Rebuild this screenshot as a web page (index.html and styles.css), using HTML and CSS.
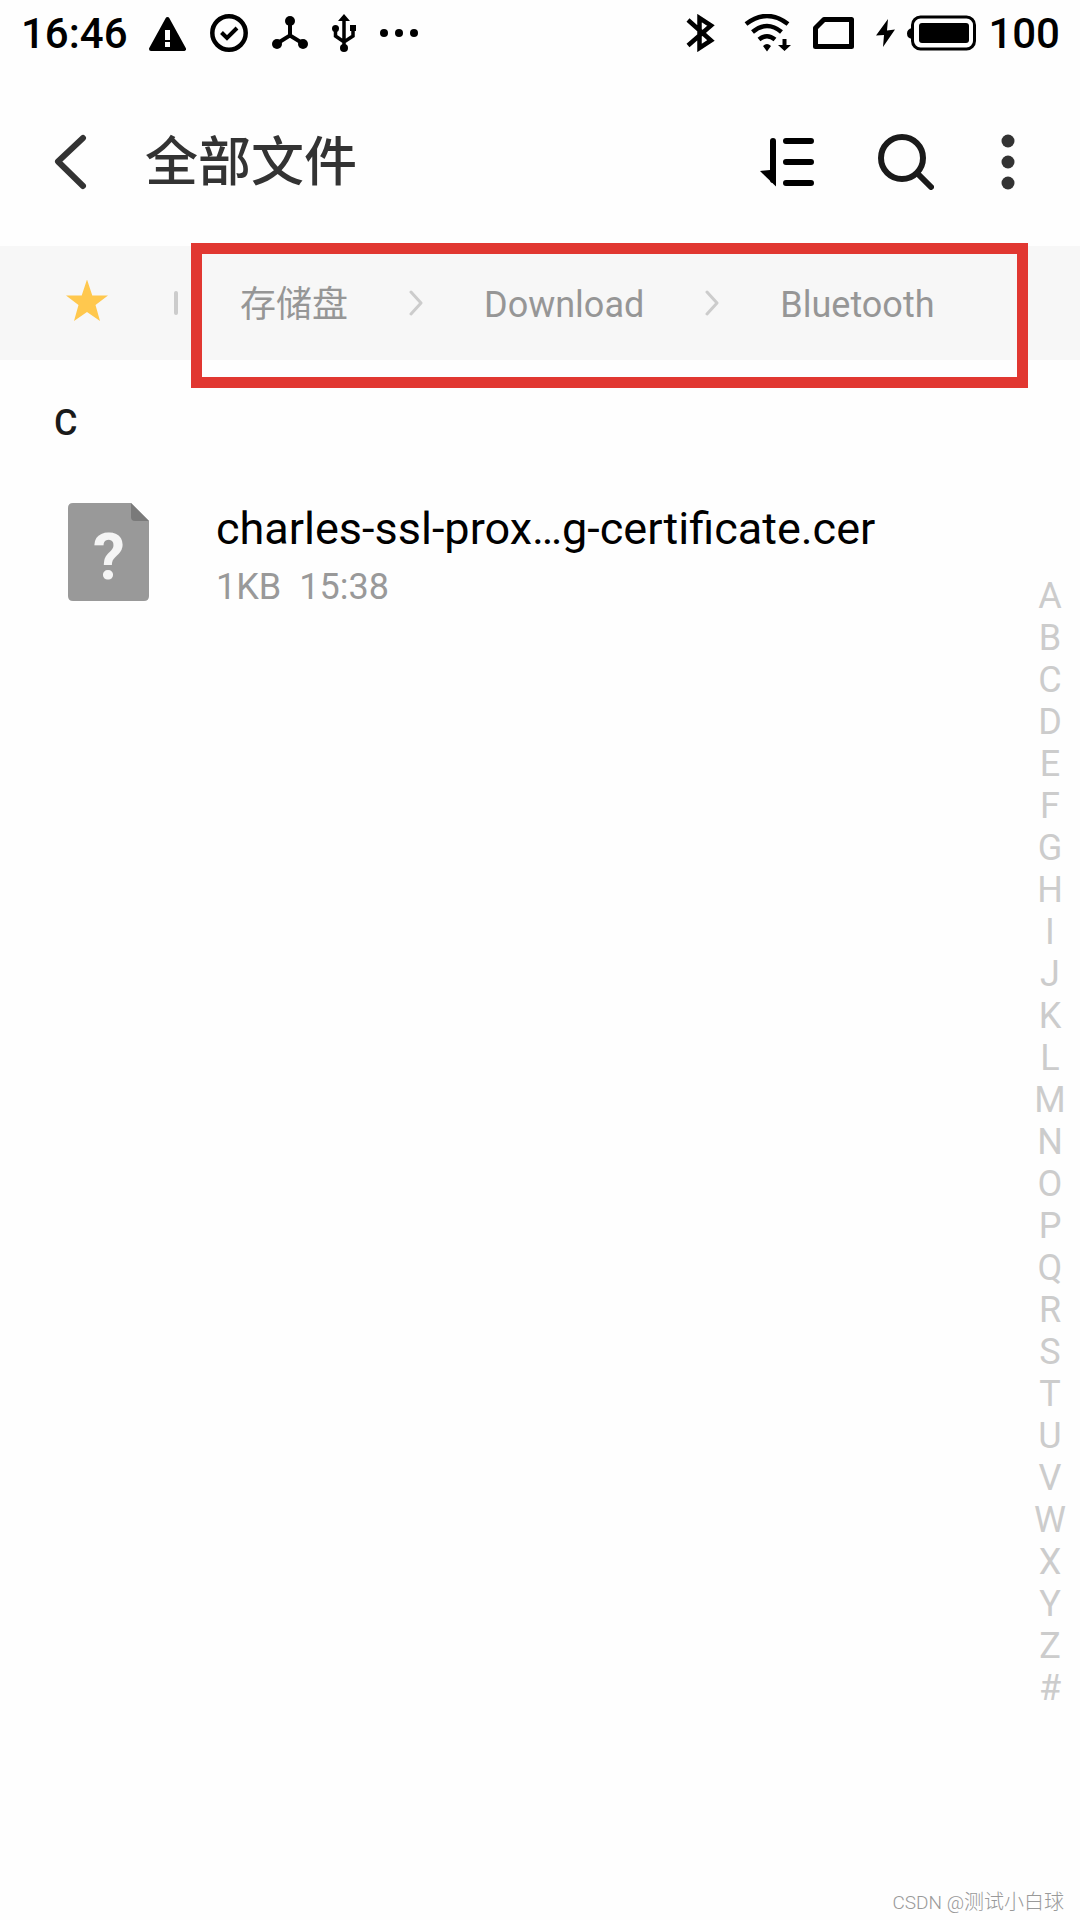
FILE: index.html
```
<!DOCTYPE html>
<html lang="zh-CN">
<head>
<meta charset="utf-8">
<meta name="viewport" content="width=device-width, initial-scale=1">
<title>全部文件</title>
<link rel="stylesheet" href="styles.css">
</head>
<body class="screen">
  <div class="status">
    <div class="status-left">
      <span class="time">16:46</span>
      <div class="notices">
        <svg width="37" height="38" viewBox="149 14 37 38" aria-hidden="true"><path d="M167.500 19 184 49H151z" stroke="#000" stroke-width="4" stroke-linejoin="round"/><path d="M165 30h5v10h-5zM165 42h5v5h-5z" fill="#fff"/></svg>
        <svg width="38" height="38" viewBox="210 14 38 38" aria-hidden="true" fill="none" stroke="#000"><circle cx="229" cy="33" r="16.700" stroke-width="4.500"/><path d="M221.500 32.500 227 38 237 28" stroke-width="4"/></svg>
        <svg width="36" height="38" viewBox="272 14 36 38" aria-hidden="true"><path d="M290 21V35.500L277 43.500M290 35.500 303 43.500" fill="none" stroke="#000" stroke-width="4"/><circle cx="290" cy="21" r="5"/><circle cx="277" cy="44" r="5"/><circle cx="303" cy="44" r="5"/></svg>
        <svg width="24" height="38" viewBox="332 14 24 38" aria-hidden="true"><path d="M344 19V48M335.500 28V36L344 42 353 36V28" fill="none" stroke="#000" stroke-width="3.500"/><path d="M344 14 350 21H338zM350 25h6v6h-6z"/><circle cx="335.500" cy="28.500" r="3.500"/><circle cx="344" cy="48" r="4"/></svg>
        <svg width="38" height="38" viewBox="380 14 38 38" aria-hidden="true"><circle cx="384" cy="33" r="4"/><circle cx="399" cy="33" r="4"/><circle cx="414" cy="33" r="4"/></svg>
      </div>
    </div>
    <div class="status-right">
      <svg width="37" height="38" viewBox="685 14 37 38" aria-hidden="true"><path d="M687 20 710 40.500 698.500 48V18L710 25.500 687 45.500" fill="none" stroke="#000" stroke-width="4.500"/></svg>
      <svg width="48" height="38" viewBox="743 14 48 38" aria-hidden="true"><g fill="none" stroke="#000" stroke-width="4.500"><path d="M745 24Q766 8 787 24"/><path d="M751.500 32Q766 20 780.500 32"/><path d="M758 39.500Q766 33 774 39.500"/></g><path d="M762 46Q766 42 770 46L766 51.500zM781.500 39h4v6h4.500l-6.500 6-6.500-6h4.500z"/></svg>
      <svg width="41" height="38" viewBox="812 14 41 38" aria-hidden="true"><path d="M814.500 46.500V28L823 19.500H850.500V46.500z" fill="none" stroke="#000" stroke-width="5" stroke-linejoin="round"/></svg>
      <div class="power">
        <svg width="20" height="38" viewBox="874 14 20 38" aria-hidden="true"><path d="M887 19 875 35.500 883 35 882 47 894 29.500 886 30.500z"/></svg>
        <svg width="69" height="38" viewBox="907 14 69 38" aria-hidden="true"><rect x="912.500" y="17" width="62" height="32" rx="8" fill="none" stroke="#000" stroke-width="3"/><rect x="919" y="23" width="50" height="20" rx="3"/><path d="M912 28Q907 29 907 33.500T912 39z"/></svg>
        <span class="level">100</span>
      </div>
    </div>
  </div>

  <header class="toolbar">
    <button class="tool" type="button" aria-label="返回"><svg width="33" height="56" viewBox="54 134 33 56"><path d="M83 138 58 161.500 83 186" fill="none" stroke="#333" stroke-width="6" stroke-linecap="round" stroke-linejoin="round"/></svg></button>
    <h1 class="title">全部文件</h1>
    <div class="actions">
      <button class="tool" type="button" aria-label="排序"><svg width="54" height="56" viewBox="761 134 54 56"><path d="M774 141V180M787 141H812M787 162H812M787 183H812" stroke="#000" stroke-width="6" stroke-linecap="round"/><path d="M761 171 771 170H777V186.500z"/></svg></button>
      <button class="tool" type="button" aria-label="搜索"><svg width="56" height="56" viewBox="878 134 56 56"><g fill="none" stroke="#1a1a1a" stroke-width="6"><circle cx="902" cy="158" r="21"/><path d="M917.500 173.500 931 187" stroke-linecap="round"/></g></svg></button>
      <button class="tool" type="button" aria-label="更多"><svg width="20" height="56" viewBox="998 134 20 56" fill="#333"><circle cx="1008" cy="141" r="6.500"/><circle cx="1008" cy="162" r="6.500"/><circle cx="1008" cy="183" r="6.500"/></svg></button>
    </div>
  </header>

  <nav class="path" aria-label="路径">
    <button class="tool" type="button" aria-label="收藏"><svg width="42" height="46" viewBox="66 281 42 46"><path d="M87 280.500 92.300 296.500H108L95.500 306 100 322 87 313 74 322 78.500 306 66 296.500H81.700z" fill="#ffc84e"/></svg></button>
    <span class="divider"></span>
    <div class="crumbs">
      <a class="crumb" href="#">存储盘</a>
      <svg width="14" height="26" viewBox="0 0 14 26" aria-hidden="true"><path d="M2 2 12 13 2 24"/></svg>
      <a class="crumb" href="#">Download</a>
      <svg width="14" height="26" viewBox="0 0 14 26" aria-hidden="true"><path d="M2 2 12 13 2 24"/></svg>
      <a class="crumb" href="#">Bluetooth</a>
    </div>
    <span class="highlight"></span>
  </nav>

  <main class="content">
    <section class="files">
      <h2 class="group">C</h2>
      <a class="file" href="#">
        <svg width="82" height="100" viewBox="68 502 82 100" aria-hidden="true"><path d="M73 503H131L149 521V596Q149 601 144 601H73Q68 601 68 596V508Q68 503 73 503z" fill="#999"/><path d="M131 503 149 521H135Q131 521 131 517z" fill="#7a7a7a"/><text class="mark" x="109" y="579" text-anchor="middle">?</text></svg>
        <span class="file-text">
          <span class="file-name">charles-ssl-prox…g-certificate.cer</span>
          <span class="file-meta"><span>1KB</span><span>15:38</span></span>
        </span>
      </a>
    </section>
    <nav class="index" aria-label="索引">
      <a href="#">A</a><a href="#">B</a><a href="#">C</a><a href="#">D</a><a href="#">E</a><a href="#">F</a><a href="#">G</a><a href="#">H</a><a href="#">I</a><a href="#">J</a><a href="#">K</a><a href="#">L</a><a href="#">M</a><a href="#">N</a><a href="#">O</a><a href="#">P</a><a href="#">Q</a><a href="#">R</a><a href="#">S</a><a href="#">T</a><a href="#">U</a><a href="#">V</a><a href="#">W</a><a href="#">X</a><a href="#">Y</a><a href="#">Z</a><a href="#">#</a>
    </nav>
  </main>

  <footer class="credit"><span class="site">CSDN @</span>测试小白球</footer>
</body>
</html>
```
FILE: styles.css
```
* {
  box-sizing: border-box;
}

.screen {
  display: flex;
  flex-direction: column;
  min-height: 100vh;
  margin: 0;
  background: #fefefe;
  color: #000;
  font-family: Roboto, "Noto Sans CJK SC", sans-serif;
  font-size: 36px;
  line-height: 42px;
}

svg {
  display: block;
  flex: none;
}

a {
  color: inherit;
  text-decoration: none;
}

.status {
  display: flex;
  justify-content: space-between;
  align-items: center;
  height: 66px;
  padding: 0 20px 0 21px;
  font-size: 42px;
  font-weight: 500;
}

.status-left {
  display: flex;
  align-items: center;
  gap: 21px;
}

.notices {
  display: flex;
  gap: 24px;
}

.time,
.level {
  padding-top: 2px;
}

.status-right {
  display: flex;
  align-items: center;
  gap: 21px;
}

.power {
  display: flex;
  align-items: center;
  gap: 12px;
}

.toolbar {
  display: flex;
  align-items: center;
  height: 180px;
  padding: 12px 62px 0 54px;
}

.tool {
  padding: 0;
  border: 0;
  background: none;
  cursor: pointer;
}

.title {
  flex: 1;
  margin: 0 0 0 58px;
  padding-top: 2px;
  color: #333;
  font-size: 53px;
  font-weight: 500;
  line-height: 64px;
}

.actions {
  display: flex;
  gap: 64px;
}

.path {
  position: relative;
  display: flex;
  align-items: center;
  height: 114px;
  padding: 0 66px;
  background: #f7f7f7;
}

.divider {
  width: 4px;
  height: 24px;
  margin: 0 62px 0 66px;
  border-radius: 2px;
  background: #ccc;
}

.crumbs {
  display: flex;
  align-items: center;
  gap: 61px;
  fill: none;
  stroke: #ccc;
  stroke-width: 3px;
  stroke-linecap: round;
  stroke-linejoin: round;
}

.crumb {
  padding-top: 3px;
  color: #969696;
}

/* Frame drawn over the path, reaching past the strip */
.highlight {
  position: absolute;
  top: -3px;
  right: 52px;
  left: 191px;
  height: 145px;
  border: 11px solid #e13731;
  pointer-events: none;
}

.content {
  display: flex;
  flex: 1;
}

.files {
  flex: 1;
  padding-top: 42px;
}

.group {
  margin: 0 0 58px 54px;
  color: #1a1a1a;
  font-size: 36px;
  font-weight: 500;
}

.file {
  display: flex;
  gap: 66px;
  padding-left: 68px;
}

.mark {
  fill: #f5f5f5;
  font-size: 64px;
  font-weight: 700;
}

.file-text {
  display: flex;
  flex-direction: column;
  gap: 10px;
}

.file-name {
  font-size: 45px;
  line-height: 54px;
}

.file-meta {
  display: flex;
  gap: 18px;
  color: #999;
}

.index {
  display: flex;
  flex-direction: column;
  width: 60px;
  padding-top: 215px;
  color: #ccc;
  text-align: center;
}

.credit {
  padding: 0 16px 2px;
  color: #999;
  font-size: 20px;
  font-weight: 300;
  line-height: 30px;
  text-align: right;
}

.site {
  font-size: 19px;
}
```
